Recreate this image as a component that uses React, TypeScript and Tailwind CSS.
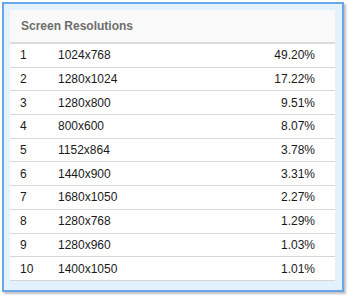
const rows = [
  ["1024x768", "49.20%"],
  ["1280x1024", "17.22%"],
  ["1280x800", "9.51%"],
  ["800x600", "8.07%"],
  ["1152x864", "3.78%"],
  ["1440x900", "3.31%"],
  ["1680x1050", "2.27%"],
  ["1280x768", "1.29%"],
  ["1280x960", "1.03%"],
  ["1400x1050", "1.01%"],
];

export default function App() {
  return (
    <div className="h-[300px] w-[353px] bg-white pl-[2px] pt-[2px] font-['Liberation_Sans',Arial,sans-serif]">
      <div className="h-[290px] w-[342px] border-2 border-[#6aa7ea] bg-[#e2f1fc] p-[6px] shadow-[2px_2px_2px_rgba(0,0,0,0.25)]">
        <div className="flex w-[325px] flex-col bg-white">
          {/* header */}
          <div className="flex h-[34px] items-center border-b-2 border-[#dcdcdc] bg-[#f9f9f9] pl-[11px] text-[12px] font-bold text-[#6e6e6e]">
            Screen Resolutions
          </div>
          {rows.map(([res, pct], i) => (
            <div
              key={i}
              className="flex h-[23.7px] items-center border-b border-[#d6d6d6] text-[12px] text-[#1a1a1a]"
            >
              <div className="w-[48px] pl-[10px]">{i + 1}</div>
              <div className="flex-1">{res}</div>
              <div className="pr-[20px] text-right">{pct}</div>
            </div>
          ))}
        </div>
      </div>
    </div>
  );
}
